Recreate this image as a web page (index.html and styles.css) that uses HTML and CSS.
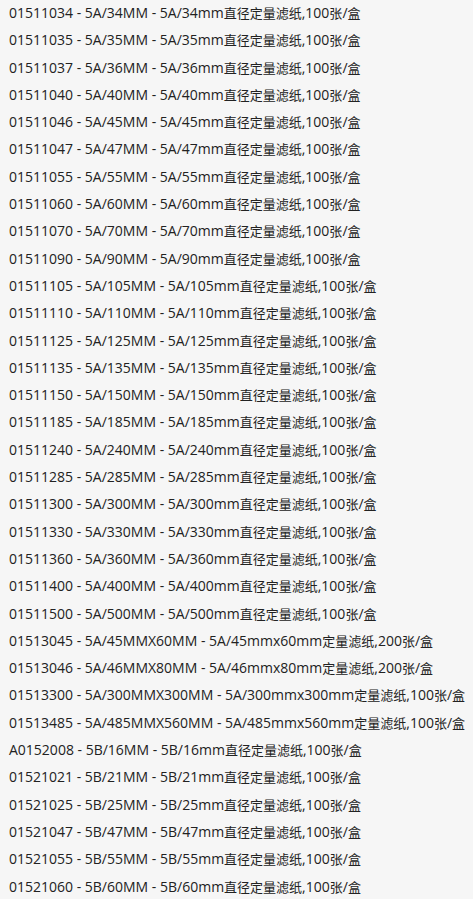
FILE: index.html
```html
<!DOCTYPE html>
<html lang="zh-CN">
<head>
    <meta charset="UTF-8">
    <meta name="viewport" content="width=device-width, initial-scale=1.0">
    <title>定量滤纸</title>
    <link rel="stylesheet" href="styles.css">
</head>
<body>
    <ul class="product-list" id="productList"></ul>

    <script>
        // Product lines: code - spec - description
        const products = [
            '01511034 - 5A/34MM - 5A/34mm直径定量滤纸,100张/盒',
            '01511035 - 5A/35MM - 5A/35mm直径定量滤纸,100张/盒',
            '01511037 - 5A/36MM - 5A/36mm直径定量滤纸,100张/盒',
            '01511040 - 5A/40MM - 5A/40mm直径定量滤纸,100张/盒',
            '01511046 - 5A/45MM - 5A/45mm直径定量滤纸,100张/盒',
            '01511047 - 5A/47MM - 5A/47mm直径定量滤纸,100张/盒',
            '01511055 - 5A/55MM - 5A/55mm直径定量滤纸,100张/盒',
            '01511060 - 5A/60MM - 5A/60mm直径定量滤纸,100张/盒',
            '01511070 - 5A/70MM - 5A/70mm直径定量滤纸,100张/盒',
            '01511090 - 5A/90MM - 5A/90mm直径定量滤纸,100张/盒',
            '01511105 - 5A/105MM - 5A/105mm直径定量滤纸,100张/盒',
            '01511110 - 5A/110MM - 5A/110mm直径定量滤纸,100张/盒',
            '01511125 - 5A/125MM - 5A/125mm直径定量滤纸,100张/盒',
            '01511135 - 5A/135MM - 5A/135mm直径定量滤纸,100张/盒',
            '01511150 - 5A/150MM - 5A/150mm直径定量滤纸,100张/盒',
            '01511185 - 5A/185MM - 5A/185mm直径定量滤纸,100张/盒',
            '01511240 - 5A/240MM - 5A/240mm直径定量滤纸,100张/盒',
            '01511285 - 5A/285MM - 5A/285mm直径定量滤纸,100张/盒',
            '01511300 - 5A/300MM - 5A/300mm直径定量滤纸,100张/盒',
            '01511330 - 5A/330MM - 5A/330mm直径定量滤纸,100张/盒',
            '01511360 - 5A/360MM - 5A/360mm直径定量滤纸,100张/盒',
            '01511400 - 5A/400MM - 5A/400mm直径定量滤纸,100张/盒',
            '01511500 - 5A/500MM - 5A/500mm直径定量滤纸,100张/盒',
            '01513045 - 5A/45MMX60MM - 5A/45mmx60mm定量滤纸,200张/盒',
            '01513046 - 5A/46MMX80MM - 5A/46mmx80mm定量滤纸,200张/盒',
            '01513300 - 5A/300MMX300MM - 5A/300mmx300mm定量滤纸,100张/盒',
            '01513485 - 5A/485MMX560MM - 5A/485mmx560mm定量滤纸,100张/盒',
            'A0152008 - 5B/16MM - 5B/16mm直径定量滤纸,100张/盒',
            '01521021 - 5B/21MM - 5B/21mm直径定量滤纸,100张/盒',
            '01521025 - 5B/25MM - 5B/25mm直径定量滤纸,100张/盒',
            '01521047 - 5B/47MM - 5B/47mm直径定量滤纸,100张/盒',
            '01521055 - 5B/55MM - 5B/55mm直径定量滤纸,100张/盒',
            '01521060 - 5B/60MM - 5B/60mm直径定量滤纸,100张/盒'
        ];

        // Render the list, CJK runs get their own (smaller) span
        const productList = document.getElementById('productList');
        products.forEach(line => {
            const li = document.createElement('li');
            li.innerHTML = line.replace(/[\u4e00-\u9fff]+/g, m => `<span class="cn">${m}</span>`);
            productList.appendChild(li);
        });
    </script>
</body>
</html>
```
FILE: styles.css
```css
body {
    margin: 0;
    padding: 0;
    background-color: #f6f6f6;
    color: #222222;
    font-family: "Open Sans", "Noto Sans CJK SC", sans-serif;
}

.product-list {
    list-style: none;
    margin: -1px 0 0 0;
    padding: 0 0 0 9px;
}

.product-list li {
    font-size: 14px;
    line-height: 27.3px;
    white-space: nowrap;
}

.product-list .cn {
    font-family: "Noto Sans CJK SC", sans-serif;
    font-size: 13px;
}
```
